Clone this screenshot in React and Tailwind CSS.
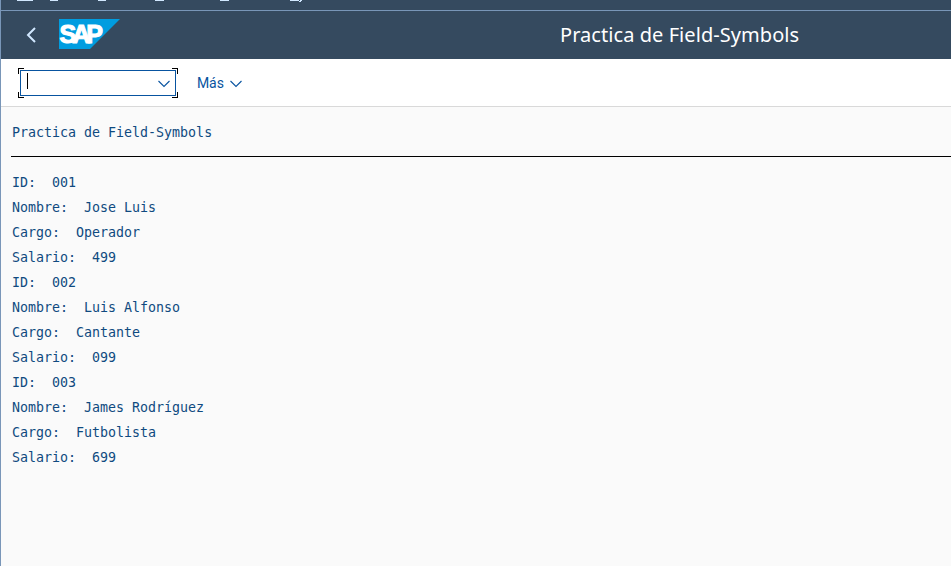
const records = [
  { id: '001', nombre: 'Jose Luis', cargo: 'Operador', salario: '499' },
  { id: '002', nombre: 'Luis Alfonso', cargo: 'Cantante', salario: '099' },
  { id: '003', nombre: 'James Rodríguez', cargo: 'Futbolista', salario: '699' },
];

function Line({ label, value }) {
  return <div className="h-[25px] whitespace-pre">{label + ':  ' + value}</div>;
}

function Corner({ className }) {
  return <span className={'absolute h-[6px] w-[6px] border-black ' + className} />;
}

function Chevron({ width, className }) {
  return (
    <svg width={width} height="8" viewBox="0 0 12 8" fill="none" stroke="currentColor" strokeWidth="1.1" preserveAspectRatio="none" className={className}>
      <path d="M.5 1 6 6.500 11.500 1" />
    </svg>
  );
}

// Bottom edge of the window's menu strip: the access-key underlines.
function MenuStrip() {
  return (
    <div className="flex h-[10px] items-start overflow-hidden pl-4">
      <span className="h-px w-4 bg-[#d1e8ff]" />
      <span className="ml-[17px] h-px w-2 bg-[#d1e8ff]" />
      <span className="ml-10 h-px w-2 bg-[#d1e8ff]" />
      <span className="ml-[49px] h-px w-[9px] bg-[#d1e8ff]" />
      <span className="ml-[56px] h-px w-[9px] bg-[#d1e8ff]" />
      <span className="ml-[61px] h-px w-[9px] bg-[#d1e8ff]" />
      <svg width="4" height="2" viewBox="0 0 4 2" fill="#d1e8ff"><path d="M1 0h2v1H2v1H0V1h1z" /></svg>
    </div>
  );
}

export default function App() {
  return (
    <div className="flex h-[566px] w-[951px] flex-col overflow-hidden border-l border-[#7996b8] bg-[#fafafa]">
      <div className="bg-[#354a5f]">
        <MenuStrip />
        <header className="flex h-[49px] items-center border-t border-[#7996b8] pl-[25px] text-white">
          <svg width="11" height="16" viewBox="0 0 11 16" fill="none" stroke="#d1e8ff" strokeWidth="2">
            <path d="M9 1 2 8l7 7" />
          </svg>
          <svg width="62" height="30" viewBox="0 0 62 30" className="mb-[2px] ml-[22px] shrink-0">
            <path d="M0 0h61L31 30H0z" fill="#009de0" />
            <text x=".5" y="23.500" fill="#fff" stroke="#fff" strokeWidth="1.1" fontFamily="Liberation Sans, sans-serif" fontWeight="700" fontSize="25" letterSpacing="-4">SAP</text>
          </svg>
          <h1 className="ml-[439px] whitespace-nowrap font-['Noto_Sans',sans-serif] text-[20px] leading-6 tracking-[0.060px]">Practica de Field-Symbols</h1>
        </header>
      </div>
      <div className="flex h-12 items-center border-b border-[#d9d9d9] bg-white pl-[17px] text-[#0854a0]">
        <div className="relative h-[30px] w-[160px] p-[2px]">
          <Corner className="left-0 top-0 border-l border-t" />
          <Corner className="right-0 top-0 border-r border-t" />
          <Corner className="bottom-0 left-0 border-b border-l" />
          <Corner className="bottom-0 right-0 border-b border-r" />
          <div className="flex h-[26px] items-center justify-between border border-[#0854a0] pl-[6px] pr-[5px]">
            <span className="mb-1 h-4 w-px bg-black" />
            <Chevron width="12" className="mt-[3px]" />
          </div>
        </div>
        <button className="ml-[19px] flex items-center font-['Roboto',sans-serif] text-[14px] tracking-[-0.1px]">
          <span className="w-[26px] pt-[2px]">Más</span>
          <Chevron width="12" className="ml-[7px] mt-[3px]" />
        </button>
      </div>
      <main className="pl-[10px] font-['DejaVu_Sans_Mono',monospace] text-[13.300px] leading-[25px] text-[#0f4a80]">
        <div className="h-[49px] border-b border-transparent pl-px pt-[13px]">Practica de Field-Symbols</div>
        <div className="h-px bg-black" />
        <div className="pl-px pt-[13px]">
          {records.map((r) => (
            <div key={r.id}>
              <Line label="ID" value={r.id} />
              <Line label="Nombre" value={r.nombre} />
              <Line label="Cargo" value={r.cargo} />
              <Line label="Salario" value={r.salario} />
            </div>
          ))}
        </div>
      </main>
    </div>
  );
}
